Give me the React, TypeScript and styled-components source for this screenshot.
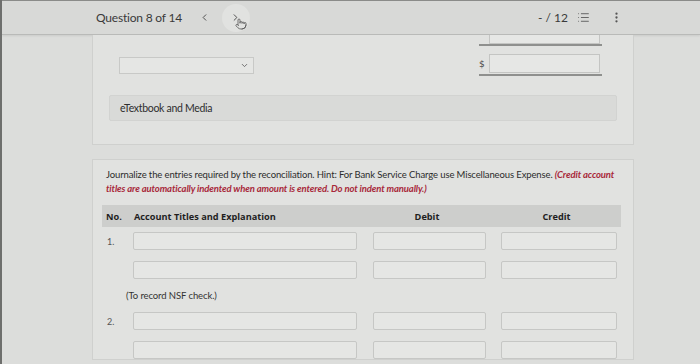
import React from 'react';
import styled, { createGlobalStyle } from 'styled-components';
import { ChevronLeft, ChevronRight, ChevronDown, List, EllipsisVertical, Pointer } from 'lucide-react';

const GlobalStyle = createGlobalStyle`
  html, body { margin: 0; padding: 0; background: #dcdddb; }
  body { font-family: Lato, "Open Sans", sans-serif; color: #333; }
`;

const rows = [
  { no: '1.', lines: 2, note: '(To record NSF check.)' },
  { no: '2.', lines: 2, note: '' },
];

const App: React.FC = () => {
  return (
    <Page>
      <GlobalStyle />
      <TopBar>
        <QuestionLabel>Question 8 of 14</QuestionLabel>
        <NavButton><ChevronLeft size={11} strokeWidth={2} /></NavButton>
        <NavButton $hover>
          <ChevronRight size={11} strokeWidth={2} />
          <HandCursor><Pointer size={12} strokeWidth={1.6} /></HandCursor>
        </NavButton>
        <Spacer />
        <Score>- / 12</Score>
        <IconButton><List size={13} strokeWidth={1.6} /></IconButton>
        <IconButton><EllipsisVertical size={13} strokeWidth={2.2} /></IconButton>
      </TopBar>
      <Main>
        <Card $first>
          <AnswerRow $cut>
            <div />
            <MoneyGroup>
              <Dollar />
              <AmountBox $cut />
            </MoneyGroup>
          </AnswerRow>
          <AnswerRow>
            <SelectBox>
              <ChevronDown size={9} strokeWidth={2.4} />
            </SelectBox>
            <MoneyGroup>
              <Dollar>$</Dollar>
              <AmountBox />
            </MoneyGroup>
          </AnswerRow>
          <MediaBar>eTextbook and Media</MediaBar>
        </Card>
        <Card>
          <Instructions>
            Journalize the entries required by the reconciliation. Hint: For Bank Service Charge use Miscellaneous Expense.{' '}
            <Warning>(Credit account titles are automatically indented when amount is entered. Do not indent manually.)</Warning>
          </Instructions>
          <Table>
            <HeadCell $align="left">No.</HeadCell>
            <HeadCell $align="left">Account Titles and Explanation</HeadCell>
            <HeadCell $align="center">Debit</HeadCell>
            <HeadCell $align="center">Credit</HeadCell>
            {rows.map((r) => (
              <React.Fragment key={r.no}>
                {Array.from({ length: r.lines }).map((_, i) => (
                  <React.Fragment key={i}>
                    <NoCell>{i === 0 ? r.no : ''}</NoCell>
                    <Cell><Field $w={224} /></Cell>
                    <Cell $pad={11}><Field $w={113} /></Cell>
                    <Cell $pad={9}><Field $w={116} /></Cell>
                  </React.Fragment>
                ))}
                {r.note && <Note>{r.note}</Note>}
              </React.Fragment>
            ))}
          </Table>
        </Card>
      </Main>
    </Page>
  );
};

const Page = styled.div`
  width: 700px;
  height: 364px;
  overflow: hidden;
  border-left: 2px solid #6e6f6d;
  box-sizing: border-box;
  background: #dcdddb;
`;

const TopBar = styled.div`
  height: 35px;
  display: flex;
  align-items: center;
  padding: 0 71px 0 94px;
  background: #d8d9d7;
  border-top: 1px solid #8a8b89;
  border-bottom: 1px solid #b9bab8;
  box-shadow: 0 1px 2px rgba(0, 0, 0, 0.08);
  box-sizing: border-box;
`;

const QuestionLabel = styled.span`
  font-size: 12px;
  color: #3a3a3a;
  letter-spacing: -0.2px;
  margin-right: 9px;
`;

const NavButton = styled.button<{ $hover?: boolean }>`
  position: relative;
  width: 28px;
  height: 28px;
  border: none;
  border-radius: 50%;
  padding: 0;
  margin-right: 3px;
  display: flex;
  align-items: center;
  justify-content: center;
  color: #444;
  background: ${(p) => (p.$hover ? '#e1e2e0' : 'transparent')};
`;

const HandCursor = styled.span`
  position: absolute;
  left: 13px;
  top: 14px;
  color: #555;
  display: flex;
`;

const Spacer = styled.div`
  flex: 1;
`;

const Score = styled.span`
  font-size: 12px;
  color: #3a3a3a;
  margin-right: 2px;
`;

const IconButton = styled.span`
  width: 26px;
  display: flex;
  justify-content: center;
  color: #555;
  & + & { margin-left: 7px; }
`;

const Main = styled.div`
  padding: 0 0 0 90px;
  display: flex;
  flex-direction: column;
  gap: 14px;
`;

const Card = styled.div<{ $first?: boolean }>`
  width: 542px;
  box-sizing: border-box;
  background: #e1e2e0;
  border: 1px solid #cfd0ce;
  border-top: ${(p) => (p.$first ? 'none' : '1px solid #cfd0ce')};
  padding: ${(p) => (p.$first ? '0 16px 23px 16px' : '8px 9px 0 9px')};
`;

const AnswerRow = styled.div<{ $cut?: boolean }>`
  display: flex;
  justify-content: space-between;
  padding: 0 15px 0 10px;
  height: ${(p) => (p.$cut ? '11px' : '22px')};
  margin-bottom: ${(p) => (p.$cut ? '8px' : '19px')};
  align-items: ${(p) => (p.$cut ? 'flex-end' : 'center')};
`;

const SelectBox = styled.div`
  width: 135px;
  height: 17px;
  box-sizing: border-box;
  border: 1px solid #c8c9c7;
  background: #e5e6e4;
  display: flex;
  align-items: center;
  justify-content: flex-end;
  padding-right: 4px;
  color: #666;
`;

const MoneyGroup = styled.div`
  display: flex;
  align-items: center;
  width: 123px;
  height: 100%;
  border-bottom: 2px solid #8f908e;
  box-sizing: border-box;
`;

const Dollar = styled.span`
  width: 10px;
  font-size: 9px;
  font-family: "DejaVu Sans", sans-serif;
  color: #444;
`;

const AmountBox = styled.div<{ $cut?: boolean }>`
  width: 111px;
  height: ${(p) => (p.$cut ? '9px' : '19px')};
  box-sizing: border-box;
  border: 1px solid #c4c5c3;
  border-top: ${(p) => (p.$cut ? 'none' : '1px solid #c4c5c3')};
  background: #e6e7e5;
  align-self: flex-start;
`;

const MediaBar = styled.div`
  height: 24px;
  display: flex;
  align-items: center;
  padding-left: 10px;
  background: #d9dad8;
  border: 1px solid #d2d3d1;
  border-radius: 2px;
  font-size: 10.5px;
  letter-spacing: -0.3px;
  color: #2e2e2e;
`;

const Instructions = styled.p`
  margin: 0 0 9px 4px;
  font-size: 9.5px;
  line-height: 14px;
  letter-spacing: -0.12px;
  color: #2c2c2c;
`;

const Warning = styled.span`
  color: #a8283a;
  font-weight: 700;
  font-style: italic;
`;

const Table = styled.div`
  display: grid;
  grid-template-columns: 28px 232px 130px 129px;
  row-gap: 11px;
`;

const HeadCell = styled.div<{ $align: 'left' | 'center' }>`
  height: 22px;
  display: flex;
  align-items: center;
  justify-content: ${(p) => (p.$align === 'center' ? 'center' : 'flex-start')};
  padding-left: ${(p) => (p.$align === 'center' ? '0' : '4px')};
  background: #cdcecc;
  font-family: "Open Sans", sans-serif;
  font-weight: 700;
  font-size: 9.2px;
  color: #1f1f1f;
  margin-bottom: -6px;
`;

const NoCell = styled.div`
  font-size: 9px;
  color: #555;
  padding-left: 5px;
  display: flex;
  align-items: center;
`;

const Cell = styled.div<{ $pad?: number }>`
  padding-left: ${(p) => p.$pad ?? 3}px;
`;

const Field = styled.div<{ $w: number }>`
  width: ${(p) => p.$w}px;
  height: 18px;
  box-sizing: border-box;
  background: #e5e6e4;
  border: 1px solid #c6c7c5;
  border-radius: 2px;
`;

const Note = styled.div`
  grid-column: 2 / 5;
  font-size: 9.5px;
  color: #333;
  margin: 0 0 0 -4px;
  letter-spacing: -0.1px;
`;

export default App;
